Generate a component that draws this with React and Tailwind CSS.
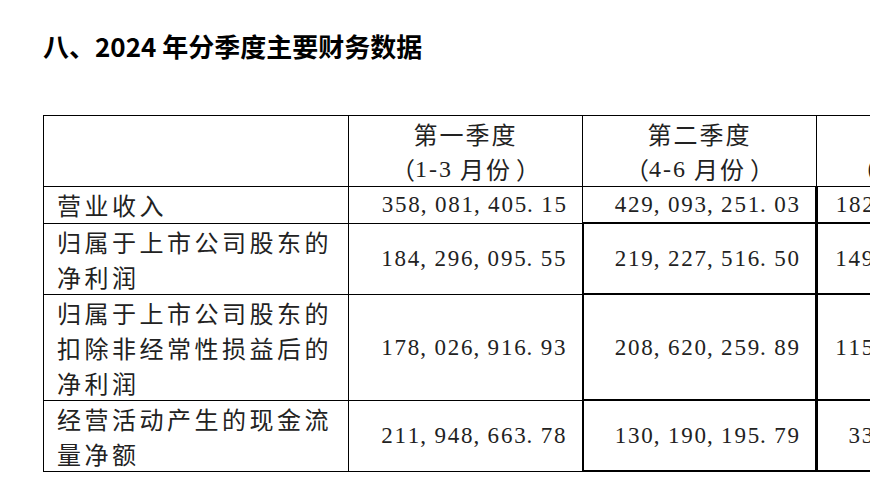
import React from 'react'

const rows = [
  { label: ['营业收入'], values: ['358,081,405.15', '429,093,251.03', '182,734,618.42'] },
  { label: ['归属于上市公司股东的', '净利润'], values: ['184,296,095.55', '219,227,516.50', '149,582,307.16'] },
  { label: ['归属于上市公司股东的', '扣除非经常性损益后的', '净利润'], values: ['178,026,916.93', '208,620,259.89', '115,403,872.61'] },
  { label: ['经营活动产生的现金流', '量净额'], values: ['211,948,663.78', '130,190,195.79', '33,851,204.97'] },
]

const heads = [
  ['第一季度', '1-3'],
  ['第二季度', '4-6'],
  ['第三季度', '7-9'],
]

const cjk = { fontFamily: '"Noto Sans CJK SC", sans-serif' }

// half-width monospace digits, like the Song face in the source PDF
function Num({ text, w = 'w-[13.3px]' }) {
  return (
    <span className="whitespace-nowrap">
      {text.split('').map((c, i) => (
        <span
          key={i}
          className={(c === ',' || c === '.' ? 'text-left ' : 'text-center ') + 'inline-block ' + w}
        >
          {c}
        </span>
      ))}
    </span>
  )
}

function cellClass(ri, vi) {
  const base = 'border-black align-middle text-[23px] leading-[35px] text-[#222] text-right pr-[15px] '
  if (vi === 0) return base + 'border-[1.5px]'
  if (vi === 1) return base + (ri === 0 ? 'border-[1.5px]' : 'border-[2.5px]')
  return base + (ri === 0 ? 'border-[1.5px] border-l-[3px]' : 'border-[2.5px] border-l-[3px]')
}

export default function App() {
  const serif = { fontFamily: '"Liberation Serif", "Noto Sans CJK SC", serif' }
  return (
    <div className="w-[870px] h-[492px] overflow-hidden bg-white text-black pl-[43px]">
      <div
        className="pt-[28px] text-[26px] leading-[36px] font-bold"
        style={{ fontFamily: '"Noto Sans CJK SC", "Noto Sans", sans-serif' }}
      >
        八、2024 年分季度主要财务数据
      </div>

      <table className="mt-[51px] border-collapse table-fixed w-[993px]" style={serif}>
        <colgroup>
          <col className="w-[305px]" />
          <col className="w-[234px]" />
          <col className="w-[234px]" />
          <col className="w-[220px]" />
        </colgroup>
        <thead>
          <tr>
            <th className="border-[1.5px] border-black h-[71px]" />
            {heads.map((h, i) => (
              <th
                key={i}
                className="border-[1.5px] border-black font-normal align-middle text-[24px] text-[#222]"
              >
                <div className="h-[35px] flex items-center justify-center tracking-[2px]" style={cjk}>{h[0]}</div>
                <div className="h-[35px] flex items-center justify-center whitespace-nowrap">
                  <span style={cjk}>（</span>
                  <Num text={h[1]} w="w-[12px]" />
                  <span className="ml-[9px] tracking-[2px]" style={cjk}>月份</span>
                  <span className="ml-[4px]" style={cjk}>）</span>
                </div>
              </th>
            ))}
          </tr>
        </thead>
        <tbody>
          {rows.map((r, ri) => (
            <tr key={ri}>
              <td
                className="border-[1.5px] border-black pl-[13px] align-middle text-[24px] leading-[35px] tracking-[3.5px] text-[#222]"
                style={cjk}
              >
                {r.label.map((l, li) => (
                  <div key={li} className="whitespace-nowrap">{l}</div>
                ))}
              </td>
              {r.values.map((v, vi) => (
                <td key={vi} className={cellClass(ri, vi)}>
                  <Num text={v} />
                </td>
              ))}
            </tr>
          ))}
        </tbody>
      </table>
    </div>
  )
}
